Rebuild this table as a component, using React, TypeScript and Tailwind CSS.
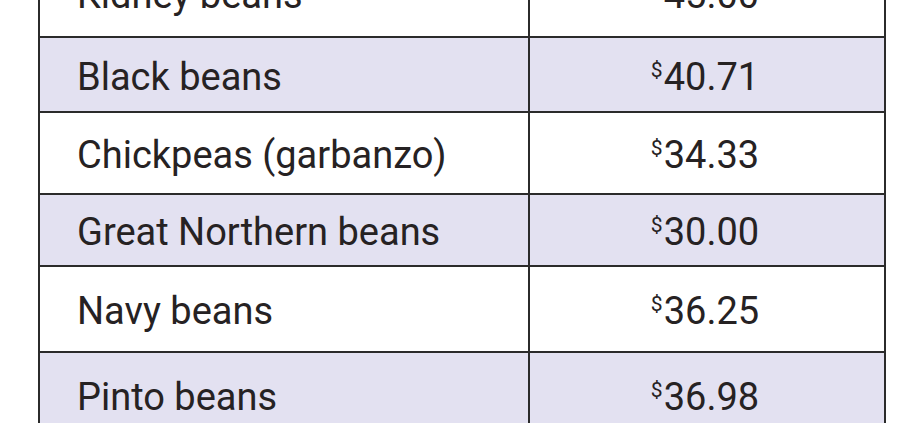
const rows = [
  { name: "Kidney beans", price: "45.00", h: "h-[88px]", shade: false },
  { name: "Black beans", price: "40.71", h: "h-[75px]", shade: true },
  { name: "Chickpeas (garbanzo)", price: "34.33", h: "h-[82px]", shade: false },
  { name: "Great Northern beans", price: "30.00", h: "h-[72px]", shade: true },
  { name: "Navy beans", price: "36.25", h: "h-[86px]", shade: false },
  { name: "Pinto beans", price: "36.98", h: "h-[86px]", shade: true },
]

export default function App() {
  return (
    <div className="w-[914px] h-[423px] overflow-hidden bg-white font-['Roboto',sans-serif] text-[#262223]">
      <div className="-mt-[50px] ml-[38px] w-[848px]">
        {rows.map((row) => (
          <div
            key={row.name}
            className={`flex border-b-2 border-[#2b2b2b] ${row.h} ${row.shade ? "bg-[#e3e1f1]" : "bg-white"}`}
          >
            <div className="w-[490px] flex items-center pl-[37px] pt-[4px] border-l-2 border-[#2b2b2b] text-[38px] leading-none">
              {row.name}
            </div>
            <div className="flex-1 flex items-center justify-center pt-[4px] border-x-2 border-[#2b2b2b] text-[38px] leading-none">
              <span className="pr-[4px]">
                <span className="text-[21px] align-[13px] mr-[1px]">$</span>
                {row.price}
              </span>
            </div>
          </div>
        ))}
      </div>
    </div>
  )
}
